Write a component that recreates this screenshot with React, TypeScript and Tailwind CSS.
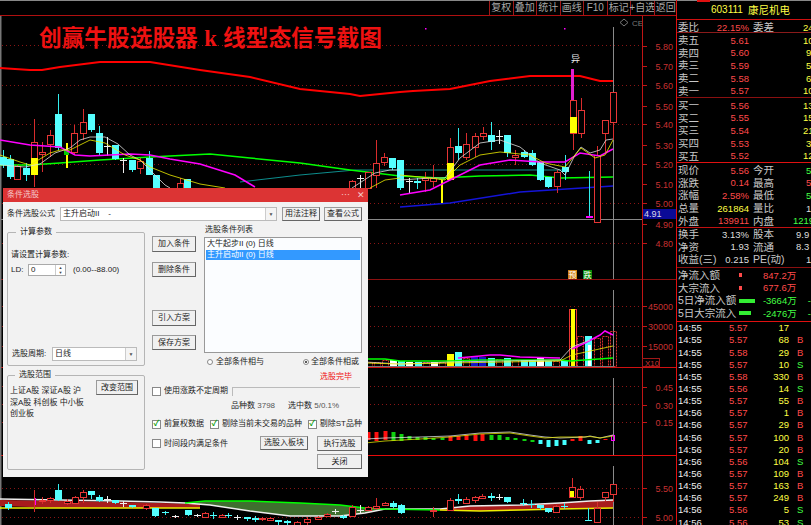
// 选股器截图：左侧 K 线图 + 条件选股弹窗，右侧盘口
type Candle = [number, number, number, number, number, string];

// x, 实体上, 实体下, 影线上, 影线下, 类型 (r 空心红 / c 青 / w 十字白)
const mainCandles: Candle[] = [
  [3, 157, 165, 150, 168, "c"], [10, 159, 177, 155, 179, "c"], [17, 166, 179, 165, 180, "r"], [26, 168, 175, 163, 181, "c"],
  [34, 142, 158, 119, 187, "r"], [42, 152, 154, 142, 172, "r"], [50, 135, 144, 130, 157, "r"], [58, 114, 148, 94, 150, "c"],
  [74, 133, 152, 125, 155, "r"], [83, 122, 133, 109, 140, "r"], [91, 114, 130, 114, 132, "c"], [99, 133, 153, 126, 155, "c"],
  [107, 146, 147, 137, 156, "w"], [115, 145, 159, 145, 160, "c"], [123, 160, 161, 158, 173, "w"], [132, 160, 170, 160, 172, "c"],
  [140, 161, 168, 158, 174, "r"], [149, 158, 175, 151, 175, "c"], [156, 175, 188, 175, 188, "c"], [180, 183, 188, 178, 188, "r"], [187, 179, 188, 179, 188, "c"],
  [352, 181, 188, 180, 188, "r"], [360, 178, 179, 175, 188, "w"], [368, 172, 188, 172, 188, "r"], [376, 163, 175, 140, 188, "r"], [384, 157, 162, 153, 166, "r"],
  [392, 158, 168, 158, 170, "c"], [400, 160, 188, 160, 190, "c"], [409, 181, 182, 178, 193, "w"], [417, 181, 183, 178, 189, "c"], [425, 178, 180, 172, 192, "r"], [433, 178, 181, 165, 187, "r"],
  [458, 146, 153, 128, 160, "c"], [466, 144, 157, 133, 160, "r"], [475, 136, 147, 133, 157, "r"], [483, 133, 136, 127, 140, "r"], [491, 135, 142, 122, 150, "c"],
  [499, 136, 137, 130, 144, "w"], [507, 135, 153, 135, 157, "c"], [515, 155, 157, 150, 165, "r"], [524, 152, 157, 150, 158, "c"], [532, 153, 165, 150, 166, "c"],
  [540, 162, 180, 162, 181, "c"], [548, 177, 187, 177, 188, "c"], [557, 172, 186, 170, 193, "r"], [565, 167, 172, 155, 180, "c"], [581, 110, 133, 98, 138, "r"],
  [589, 216, 218, 171, 218, "c"], [597, 155, 222, 146, 222, "r"], [605, 120, 133, 120, 152, "r"], [613, 92, 122, 92, 140, "r"],
];

const lowCandles: Candle[] = [
  [8, 504, 508, 502, 510, "c"], [42, 500, 501, 497, 504, "r"], [50, 498, 500, 497, 503, "r"], [58, 490, 500, 484, 501, "c"], [67, 501, 503, 499, 505, "r"],
  [75, 497, 503, 496, 504, "r"], [83, 492, 497, 490, 503, "r"], [91, 491, 495, 491, 499, "c"], [99, 497, 501, 495, 502, "c"], [107, 499, 500, 496, 503, "w"],
  [115, 500, 503, 500, 504, "c"], [123, 503, 504, 501, 507, "w"], [132, 505, 507, 505, 508, "c"], [146, 505, 508, 504, 510, "r"], [155, 508, 516, 508, 517, "c"],
  [165, 512, 513, 511, 515, "c"], [175, 516, 517, 515, 518, "w"], [188, 510, 515, 510, 516, "c"], [197, 515, 516, 514, 517, "w"], [205, 513, 517, 512, 518, "r"], [213, 515, 516, 512, 519, "c"],
  [222, 515, 517, 514, 518, "r"], [228, 515, 516, 513, 518, "c"], [237, 517, 518, 515, 520, "w"], [247, 517, 519, 517, 521, "c"], [255, 518, 520, 516, 522, "c"],
  [262, 518, 519, 517, 521, "r"], [270, 518, 520, 517, 521, "r"], [278, 520, 522, 520, 525, "c"], [287, 521, 523, 520, 525, "c"], [297, 522, 525, 521, 525, "r"], [307, 519, 522, 517, 525, "r"],
  [318, 517, 519, 516, 520, "r"], [327, 514, 516, 513, 517, "r"], [335, 511, 512, 509, 514, "w"], [343, 516, 518, 515, 519, "c"], [352, 507, 516, 505, 517, "r"], [360, 510, 511, 505, 513, "w"], [368, 507, 510, 506, 511, "r"],
  [376, 506, 508, 498, 510, "r"], [385, 503, 505, 502, 506, "r"], [393, 503, 507, 501, 508, "c"], [401, 505, 513, 504, 514, "c"], [433, 510, 511, 507, 517, "r"],
  [450, 500, 510, 498, 511, "r"], [458, 499, 501, 494, 504, "c"], [466, 499, 503, 497, 504, "r"], [475, 497, 500, 496, 503, "r"], [482, 496, 498, 494, 499, "r"],
  [491, 496, 498, 493, 501, "c"], [499, 497, 498, 494, 500, "w"], [507, 497, 502, 497, 503, "c"], [523, 503, 504, 499, 506, "c"], [531, 504, 505, 500, 508, "c"], [540, 505, 508, 505, 510, "c"],
  [548, 508, 512, 508, 513, "c"], [556, 506, 512, 505, 513, "r"], [564, 506, 507, 503, 509, "c"], [572, 487, 497, 478, 498, "r"], [580, 489, 497, 486, 500, "r"],
  [588, 520, 521, 508, 521, "c"], [597, 508, 522, 502, 522, "r"], [605, 492, 497, 492, 501, "r"], [613, 484, 494, 484, 502, "r"],
];

// 量能柱 x, 顶部, 类型
const volBars: [number, number, string][] = [
  [369, 362, "r"], [377, 362, "r"], [385, 360, "r"], [393, 360, "w"], [401, 361, "c"], [409, 362, "w"], [418, 362, "c"], [426, 362, "r"], [434, 362, "w"], [442, 362, "r"],
  [450, 354, "y"], [458, 352, "c"], [466, 358, "r"], [474, 357, "b"], [482, 357, "b"], [491, 358, "c"], [499, 359, "r"], [507, 358, "c"], [515, 360, "r"], [524, 360, "c"],
  [532, 360, "c"], [540, 357, "w"], [548, 361, "c"], [556, 361, "r"], [564, 360, "c"], [580, 336, "r"], [588, 336, "c"], [597, 338, "r"], [605, 336, "r"], [613, 331, "r"],
];

// 指标柱 x, 上, 下, 颜色
const macdBars: [number, number, number, string][] = [
  [368, 432, 440, "#ff1010"], [376, 432, 441, "#ff1010"], [385, 431, 440, "#ff1010"], [393, 432, 441, "#10d010"], [401, 434, 441, "#10d010"], [409, 436, 440, "#10d010"],
  [417, 437, 440, "#10d010"], [425, 437, 440, "#10d010"], [433, 438, 440, "#10d010"], [442, 438, 440, "#10d010"], [450, 436, 441, "#ff1010"], [458, 436, 440, "#ff1010"],
  [466, 435, 440, "#ff1010"], [475, 435, 441, "#ff1010"], [482, 434, 441, "#ff1010"], [491, 435, 440, "#10d010"], [499, 435, 440, "#10d010"], [507, 437, 440, "#10d010"],
  [515, 438, 440, "#10d010"], [524, 439, 441, "#10d010"], [532, 440, 442, "#10d010"], [540, 440, 444, "#4ff"], [548, 440, 447, "#4ff"], [556, 440, 446, "#4ff"], [564, 440, 445, "#4ff"],
  [572, 439, 441, "#ff1010"], [580, 436, 441, "#ff1010"], [589, 440, 444, "#4ff"], [597, 440, 443, "#4ff"], [605, 439, 440, "#ff1010"],
];

const priceLabels: [string, number][] = [
  ["5.80", 46], ["5.70", 66], ["5.60", 85], ["5.50", 106], ["5.40", 124], ["5.30", 145], ["5.20", 164], ["5.10", 184], ["5.00", 203], ["4.90", 224], ["4.80", 243],
  ["45000", 306], ["30000", 326], ["15000", 346], ["0.45", 387], ["0.30", 405], ["0.15", 422], ["5.50", 488], ["5.00", 517],
];

const gridY = [45, 85, 124, 164, 203, 243, 306, 326, 346, 386, 404, 422, 488, 517];

function Candles({ data }: { data: Candle[] }) {
  return (
    <>
      {data.map(([x, top, bottom, hi, lo, kind], i) => {
        if (kind === "c") {
          return (
            <g key={i}>
              <rect x={x} y={hi} width={1} height={lo - hi} fill="#3ee" />
              <rect x={x - 3} y={top} width={7} height={bottom - top} fill="#55ffff" />
            </g>
          );
        }
        if (kind === "w") {
          return (
            <g key={i}>
              <rect x={x} y={hi} width={1} height={lo - hi} fill="#eee" />
              <rect x={x - 3} y={top} width={7} height={1} fill="#eee" />
            </g>
          );
        }
        return (
          <g key={i}>
            <rect x={x} y={hi} width={1} height={lo - hi} fill="#d82c2c" />
            <rect x={x - 2.5} y={top + 0.5} width={6} height={bottom - top} fill="#000" stroke="#e63535" />
          </g>
        );
      })}
    </>
  );
}

function Line({ pts, color, w = 1, dash }: { pts: string; color: string; w?: number; dash?: string }) {
  return <polyline points={pts} fill="none" stroke={color} strokeWidth={w} strokeDasharray={dash} />;
}

function ChartSvg() {
  return (
    <svg viewBox="0 16 677 509" className="block w-[677px] h-[509px]">
      {/* 分隔线 */}
      {gridY.map((y) => (
        <line key={y} x1={2} x2={642} y1={y + 0.5} y2={y + 0.5} stroke="#8a1515" strokeDasharray="1 3" />
      ))}
      <rect x={0} y={279} width={677} height={1} fill="#8c1010" />
      <rect x={0} y={367} width={677} height={1} fill="#d01010" />
      <rect x={0} y={455} width={677} height={1} fill="#e80a0a" />
      <rect x={0} y={219} width={643} height={1} fill="#888" />
      <rect x={642} y={16} width={1} height={509} fill="#c01515" />
      <rect x={0} y={16} width={1.5} height={509} fill="#777" />
      <rect x={613} y={27} width={1} height={252} fill="#8a8a8a" />
      <rect x={613} y={290} width={1} height={76} fill="#8a8a8a" />
      <rect x={613} y={378} width={1} height={77} fill="#8a8a8a" />
      <rect x={613} y={466} width={1} height={59} fill="#8a8a8a" />

      {/* 坐标 */}
      {priceLabels.map(([t, y], i) => (
        <g key={i}>
          <rect x={642} y={y} width={5} height={1} fill="#c01515" />
          <text x={673} y={y + 3.5} textAnchor="end" fontSize={9} fill="#c83232">{t}</text>
        </g>
      ))}
      <rect x={643} y={209} width={34} height={10} fill="#0a0a96" />
      <text x={644} y={217} fontSize={9} fill="#d8d8e8">4.91</text>
      <rect x={642.5} y={358.5} width={17} height={8} fill="none" stroke="#a01818" />
      <text x={645} y={365.5} fontSize={8} fill="#c83232">X10</text>

      {/* 均线 */}
      <polyline points="0,68 30,70 42,70 60,67 100,62 150,62 200,70 250,77 300,89 350,94 360,96 400,92 413,91 450,89 490,81 530,76 550,76 580,76 600,81 613,81" fill="none" stroke="#f00" strokeWidth={2} />
      <Line pts="240,182 300,175 355,170 400,170 565,170" color="#0d8d8d" />
      <Line pts="400,207 450,203 520,192 613,186" color="#1414d8" w={1.5} />
      <Line pts="0,165 30,165 60,163 100,160 150,157 210,154 250,158 300,163 350,170 400,176 440,178 480,176 530,175 560,178 613,177" color="#0f0" w={1.5} />

      <Candles data={mainCandles} />

      {/* 涨停标记 */}
      <rect x={66} y={143} width={2} height={25} fill="#ff0" />
      <rect x={64} y={150} width={5} height={5} fill="#0c0" />
      <rect x={31} y={158} width={7} height={17} fill="#ff0" />
      <rect x={441} y={180} width={2} height={23} fill="#ff0" />
      <rect x={439} y={178} width={6} height={2} fill="#0c0" />
      <rect x={450} y={138} width={1} height={10} fill="#d82c2c" />
      <rect x={447.5} y={147.5} width={6} height={16} fill="#000" stroke="#e63535" />
      <rect x={447} y={163} width={7} height={17} fill="#ff0" />
      <rect x={573} y={133} width={1} height={17} fill="#d82c2c" />
      <rect x={571} y={69} width={3} height={31} fill="#e020d0" />
      <rect x={570.5} y={100.5} width={6} height={33} fill="#000" stroke="#e63535" />
      <rect x={570} y={117} width={7} height={16} fill="#ff0" />
      <rect x={586} y={216} width={7} height={2} fill="#f0f" />
      <text x={571} y={62} fontSize={9} fill="#eee">异</text>
      <rect x={425} y={28} width={1.5} height={1.5} fill="#f0f" />
      <rect x={564} y={28} width={1.5} height={1.5} fill="#f0f" />
      <polygon points="624,19 628,22.5 624,26 620,22.5" fill="none" stroke="#777" />
      <text x={632} y={26} fontSize={8} fill="#777">CE</text>

      <Line pts="0,140 30,145 60,147 75,155 90,156 130,154 150,155 170,159 200,164 235,175 255,187" color="#f0f" w={1.5} />
      <Line pts="400,195 430,190 450,180 480,165 510,160 540,162 565,162 580,153 600,156 613,149" color="#f0f" w={1.5} />
      <Line pts="0,165 25,167 40,164 55,153 70,148 80,140 90,137 105,137 118,144 130,155 140,160 150,170 165,185 170,188" color="#ddd" w={0.8} />
      <Line pts="352,188 375,173 390,170 400,170" color="#ddd" w={0.8} />
      <Line pts="400,180 430,178 445,178 460,158 480,143 500,140 520,147 540,163 560,170 565,175 575,155 581,147 590,153 600,150 606,140 613,139" color="#ddd" w={0.8} />
      <Line pts="0,155 20,162 30,165 50,153 60,150 70,150 90,140 105,143 125,155 140,160 150,167 170,175 200,184 225,188" color="#ee0" w={0.8} />
      <Line pts="370,188 385,180 400,178" color="#ee0" w={0.8} />
      <Line pts="400,175 430,178 445,180 460,165 480,155 500,152 530,155 545,163 565,167 575,155 581,148 595,158 605,155 613,140" color="#ee0" w={0.8} />

      {/* 量能 */}
      {volBars.map(([x, top, k]) =>
        k === "r" ? (
          <rect key={x} x={x - 2.5} y={top + 0.5} width={6} height={366 - top} fill="none" stroke="#d83030" strokeDasharray="2 1" />
        ) : (
          <rect key={x} x={x - 3} y={top} width={7} height={366 - top} fill={k === "c" ? "#55ffff" : k === "w" ? "#fff" : k === "y" ? "#ff0" : "#1414c8"} />
        ),
      )}
      <rect x={569.5} y={309.5} width={7} height={57} fill="none" stroke="#e63535" />
      <rect x={571} y={309} width={4} height={57} fill="#ff0" />
      <rect x={588} y={345} width={3} height={21} fill="#fff" />
      <rect x={365} y={366} width={249} height={1} fill="#777" />
      <Line pts="365,359 385,359 400,361 450,361 480,360 560,360 570,361 613,358" color="#0f0" w={1.5} />
      <Line pts="458,358 480,356 490,355 500,355 520,357 560,358" color="#f0f" w={1.5} />
      <Line pts="572,349 585,343 600,335 605,331 613,335" color="#f0f" w={1.5} />
      <Line pts="365,362 400,364 450,362 560,360 572,347 590,340" color="#ddd" w={0.8} />
      <Line pts="365,363 400,364 450,363 560,361 572,355 613,346" color="#ee0" w={0.8} />
      <rect x={568} y={270} width={9} height={9} fill="#d08010" />
      <text x={568.5} y={278} fontSize={8} fill="#fff">预</text>
      <rect x={583} y={270} width={9} height={9} fill="#0a8a0a" />
      <text x={583.5} y={278} fontSize={8} fill="#fff">跌</text>

      {/* 指标 */}
      {macdBars.map(([x, a, b, c]) => (
        <rect key={x} x={x - 1.5} y={a} width={4} height={b - a} fill={c} />
      ))}
      <rect x={611.5} y={435.5} width={3} height={5} fill="none" stroke="#f0f" />
      <Line pts="365,439 385,438 420,437 450,436 480,433 510,432 530,435 545,437 560,438 585,437 590,436 600,438 613,435" color="#ddd" w={0.8} />
      <Line pts="365,443 385,441 420,439 450,437 480,434 510,433 530,436 545,438 560,437 585,437 590,436.5 600,438 613,436" color="#dd0" w={0.8} />

      {/* 底部图 */}
      <polygon points="0,500 60,501 120,502 160,503 200,504 200,508 120,508 60,508 0,506" fill="#a81c1c" />
      <polygon points="385,509 440,509 470,506 520,505 560,503 590,501 613,500 613,508 560,509 520,510 480,511 440,510" fill="#a81c1c" />
      <polygon points="185,503 205,501 250,501 300,503 340,505 365,508 385,509 365,513 340,516 290,516 250,511 210,505" fill="#3f6f2f" />
      <Line pts="0,499 60,500 120,501 160,502 185,503 210,505 250,511 290,516 340,516 365,513 385,509 440,509 470,506 520,505 560,503 590,501 613,500" color="#eee" w={1.5} />
      <Line pts="185,503 205,501 250,501 300,503 340,505 365,508 385,509 440,510" color="#0f0" w={1.5} />
      <Line pts="0,508 60,508 120,508 200,508" color="#ee0" w={1.5} />
      <Line pts="440,510 480,511 520,510 560,509 613,508" color="#ee0" w={1.5} />
      <Candles data={lowCandles} />
      <rect x={34} y={498} width={2} height={7} fill="#f0f" />
      <rect x={34} y={490} width={1} height={22} fill="#d82c2c" />
      <rect x={570} y={491} width={4} height={6} fill="#ff0" />
    </svg>
  );
}

const toolItems = ["复权", "叠加", "统计", "画线", "F10", "标记", "+自选", "返回"];

function Btn({ label, className }: { label: string; className: string }) {
  return (
    <button className={`flex items-center justify-center bg-[#f0f0f0] border border-[#9a9a9a] border-b-[#666] border-r-[#666] text-[8px] leading-none text-[#222] ${className}`}>
      {label}
    </button>
  );
}

function Check({ on }: { on?: boolean }) {
  return (
    <span className="flex items-center justify-center w-[9px] h-[9px] shrink-0 bg-white border border-[#888] text-[8px] leading-none font-bold text-[#12a012]">
      {on ? "✓" : ""}
    </span>
  );
}

function Arrow({ className }: { className: string }) {
  return (
    <span className={`flex items-center justify-center border-l border-[#ccc] bg-[#f4f4f4] text-[#555] text-[5px] leading-none ${className}`}>▼</span>
  );
}

function ConditionDialog() {
  return (
    <div className="absolute left-[3px] top-[188px] w-[365px] h-[289px] flex flex-col bg-[#f2f2f2] text-[8px] leading-[10px] text-[#222]">
      <div className="h-[14px] shrink-0 flex items-center justify-between pl-[4px] pr-[3px] bg-[#dc3434] text-[#f5c8c8]">
        <span>条件选股</span>
        <span className="flex gap-[7px] text-[9px] leading-none">
          <span>⋯</span>
          <span>✕</span>
        </span>
      </div>

      {/* 公式行 */}
      <div className="mt-[5px] h-[14px] flex items-center pl-[4px]">
        <span className="w-[53px]">条件选股公式</span>
        <div className="w-[217px] h-[14px] flex items-center justify-between bg-white border border-[#bbb] pl-[2px]">
          <span className="whitespace-pre">主升启动II    -</span>
          <Arrow className="w-[11px] h-full" />
        </div>
        <Btn label="用法注释" className="ml-[5px] w-[38px] h-[14px]" />
        <Btn label="查看公式" className="ml-[4px] w-[38px] h-[14px]" />
      </div>

      <div className="mt-[4px] flex pl-[4px]">
        {/* 左列 */}
        <div className="w-[138px] pt-[2px] flex flex-col">
          <fieldset className="h-[139px] border border-[#b5b5b5] rounded-[2px] px-[3px]">
            <legend className="ml-[5px] px-[4px] h-[10px]">计算参数</legend>
            <div className="mt-[13px]">请设置计算参数:</div>
            <div className="mt-[4px] h-[12px] flex items-center">
              <span className="w-[17px]">LD:</span>
              <div className="w-[38px] h-[12px] flex items-center justify-between bg-white border border-[#aaa] pl-[2px]">
                <span>0</span>
                <span className="flex flex-col items-center justify-center w-[10px] h-full border-l border-[#ccc] text-[4px] leading-[5px] text-[#444]">
                  <span>▲</span>
                  <span>▼</span>
                </span>
              </div>
              <span className="ml-[7px]">(0.00--88.00)</span>
            </div>
            <div className="mt-[71px] h-[14px] flex items-center pl-[1px]">
              <span className="w-[40px]">选股周期:</span>
              <div className="w-[85px] h-[14px] flex items-center justify-between bg-white border border-[#bbb] pl-[2px]">
                <span>日线</span>
                <Arrow className="w-[11px] h-full" />
              </div>
            </div>
          </fieldset>
          <fieldset className="mt-[4px] h-[100px] border border-[#b5b5b5] rounded-[2px] px-[2px]">
            <legend className="ml-[5px] px-[4px] h-[10px]">选股范围</legend>
            <div className="flex">
              <div className="w-[77px] pt-[5px] leading-[11.5px] break-all">
                上证A股 深证A股 沪深A股 科创板 中小板 创业板
              </div>
              <Btn label="改变范围" className="ml-[9px] w-[42px] h-[15px]" />
            </div>
          </fieldset>
        </div>

        {/* 右列 */}
        <div className="ml-[7px] w-[210px] flex flex-col">
          <div className="flex">
            <div className="w-[44px] pt-[11px] flex flex-col">
              <Btn label="加入条件" className="w-[44px] h-[16px]" />
              <Btn label="删除条件" className="mt-[10px] w-[44px] h-[15px]" />
              <Btn label="引入方案" className="mt-[33px] w-[44px] h-[16px]" />
              <Btn label="保存方案" className="mt-[9px] w-[44px] h-[15px]" />
            </div>
            <div className="ml-[8px] w-[158px] flex flex-col">
              <div className="h-[12px] pl-[1px]">选股条件列表</div>
              <div className="h-[116px] bg-[#fbfdff] border border-[#999] pt-[1px] px-[1px]">
                <div className="h-[11px] pl-[1px]">大牛起步II (0) 日线</div>
                <div className="h-[10px] pl-[1px] bg-[#3399ff] text-white">主升启动II (0) 日线</div>
              </div>
              <div className="mt-[4px] h-[10px] flex items-center pl-[3px]">
                <span className="w-[6px] h-[6px] rounded-full border border-[#888] bg-white" />
                <span className="ml-[3px] w-[87px]">全部条件相与</span>
                <span className="flex items-center justify-center w-[6px] h-[6px] rounded-full border border-[#888] bg-white">
                  <span className="w-[2px] h-[2px] rounded-full bg-[#222]" />
                </span>
                <span className="ml-[2px] whitespace-nowrap">全部条件相或</span>
              </div>
              <div className="mt-[5px] h-[10px] pl-[116px] text-[#f01010] whitespace-nowrap">选股完毕</div>
            </div>
          </div>

          <div className="mt-[4px] h-[10px] flex items-center">
            <Check />
            <span className="ml-[3px] w-[68px] whitespace-nowrap">使用涨跌不定周期</span>
            <span className="w-[128px] h-[9px] border-t border-l border-[#bbb]" />
          </div>
          <div className="mt-[5px] h-[10px] flex items-center pl-[79px] border-0">
            <span className="w-[57px] whitespace-nowrap">品种数 <span className="text-[#555]">3798</span></span>
            <span className="whitespace-nowrap">选中数 <span className="text-[#555]">5/0.1%</span></span>
          </div>
          <div className="mt-[8px] h-[10px] flex items-center">
            <Check on />
            <span className="ml-[3px] w-[46px] whitespace-nowrap">前复权数据</span>
            <Check on />
            <span className="ml-[3px] w-[86px] whitespace-nowrap">剔除当前未交易的品种</span>
            <Check on />
            <span className="ml-[3px] whitespace-nowrap">剔除ST品种</span>
          </div>
          <div className="mt-[7px] flex">
            <div className="w-[108px] h-[15px] flex items-center">
              <Check />
              <span className="ml-[3px] whitespace-nowrap">时间段内满足条件</span>
            </div>
            <Btn label="选股入板块" className="w-[48px] h-[14px]" />
            <div className="ml-[9px] w-[45px] flex flex-col">
              <Btn label="执行选股" className="w-[45px] h-[15px]" />
              <Btn label="关闭" className="mt-[3px] w-[45px] h-[15px]" />
            </div>
          </div>
        </div>
      </div>
    </div>
  );
}

type QuoteData = { a: string; v: string; vc?: string; b?: string; r?: string; rc?: string; rw?: string };

function Quote({ a, v, vc = "text-[#ff4a4a]", b, r, rc = "text-[#ff4a4a]", rw = "w-[8px]" }: QuoteData) {
  return (
    <div className="h-[12.7px] flex items-center whitespace-nowrap pl-px">
      <span className="w-[34px] text-[10.5px] text-[#c8c8c8]">{a}</span>
      <span className={`w-[37px] text-right ${vc}`}>{v}</span>
      {b && <span className="ml-[4px] text-[10.5px] text-[#c8c8c8]">{b}</span>}
      {r && <span className={`ml-auto overflow-hidden ${rw} ${rc}`}>{r}</span>}
    </div>
  );
}

const asks: QuoteData[] = [
  { a: "卖五", v: "5.61", r: "10", rc: "text-[#ffff44]" }, { a: "卖四", v: "5.60", r: "9", rc: "text-[#ffff44]", rw: "w-[5px]" }, { a: "卖三", v: "5.59", r: "5", rc: "text-[#ffff44]", rw: "w-[5px]" },
  { a: "卖二", v: "5.58", r: "6", rc: "text-[#ffff44]", rw: "w-[5px]" }, { a: "卖一", v: "5.57", r: "10", rc: "text-[#ffff44]" },
];
const bids: QuoteData[] = [
  { a: "买一", v: "5.56", r: "13", rc: "text-[#ffff44]" }, { a: "买二", v: "5.55", r: "15", rc: "text-[#ffff44]" }, { a: "买三", v: "5.54", r: "21", rc: "text-[#ffff44]" },
  { a: "买四", v: "5.53", r: "3", rc: "text-[#ffff44]", rw: "w-[5px]" }, { a: "买五", v: "5.52", r: "12", rc: "text-[#ffff44]" },
];
const stats: QuoteData[] = [
  { a: "现价", v: "5.56", b: "今开", r: "5", rc: "text-[#44ff44]", rw: "w-[5px]" },
  { a: "涨跌", v: "0.14", b: "最高", r: "5", rw: "w-[5px]" },
  { a: "涨幅", v: "2.58%", b: "最低", r: "5", rc: "text-[#44ff44]", rw: "w-[5px]" },
  { a: "总量", v: "261864", vc: "text-[#ffff44]", b: "量比", r: "1", rc: "text-[#ddd]", rw: "w-[5px]" },
  { a: "外盘", v: "139911", b: "内盘", r: "1219", rc: "text-[#44ff44]", rw: "w-[18px]" },
];
const shares: QuoteData[] = [
  { a: "换手", v: "3.13%", vc: "text-[#ddd]", b: "股本", r: "9.9", rc: "text-[#ddd]", rw: "w-[15px]" },
  { a: "净资", v: "1.93", vc: "text-[#ddd]", b: "流通", r: "8.3", rc: "text-[#ddd]", rw: "w-[15px]" },
  { a: "收益(三)", v: "0.215", vc: "text-[#ddd]", b: "PE(动)", r: "1", rc: "text-[#ddd]", rw: "w-[5px]" },
];
const flows = [
  { a: "净流入额", w: "w-[3px]", bar: "bg-[#ff4a4a]", v: "847.2万", c: "text-[#ff4a4a]", tail: "" },
  { a: "大宗流入", w: "w-[3px]", bar: "bg-[#ff4a4a]", v: "677.6万", c: "text-[#ff4a4a]", tail: "" },
  { a: "5日净流入额", w: "w-[16px]", bar: "bg-[#33ee33]", v: "-3664万", c: "text-[#44ff44]", tail: "-" },
  { a: "5日大宗流入", w: "w-[12px]", bar: "bg-[#33ee33]", v: "-2476万", c: "text-[#44ff44]", tail: "-" },
];
const ticks: [string, string, string, string][] = [
  ["14:55", "5.57", "17", ""], ["14:55", "5.57", "68", "B"], ["14:55", "5.58", "29", "B"], ["14:55", "5.57", "10", "S"], ["14:55", "5.58", "330", "B"], ["14:55", "5.56", "14", "S"],
  ["14:55", "5.57", "55", "B"], ["14:56", "5.57", "1", "B"], ["14:56", "5.57", "29", "B"], ["14:56", "5.57", "100", "B"], ["14:56", "5.57", "20", "B"], ["14:56", "5.56", "104", "S"],
  ["14:56", "5.57", "109", "B"], ["14:56", "5.57", "163", "B"], ["14:56", "5.57", "249", "B"], ["14:56", "5.56", "5", "S"], ["14:56", "5.56", "53", "S"],
];

function QuotePanel() {
  return (
    <div className="w-[134px] h-[525px] shrink-0 flex flex-col overflow-hidden text-[9.5px] leading-none">
      <div className="relative h-[19px] shrink-0 flex items-center pl-[34px] text-[#ffff44] border-t border-t-[#888]">
        <span className="absolute left-[20px] top-[-1px] w-[13px] h-[2px] bg-[#e01010]" />
        <span className="text-[10px]">603111</span>
        <span className="ml-[5px] text-[10.5px]">康尼机电</span>
      </div>
      <div className="h-[14px] shrink-0 border-t border-[#d01010] border-b border-b-[#8a1a1a] pt-px">
        <Quote a="委比" v="22.15%" b="委差" r="24" rc="text-[#ffff44]" />
      </div>
      <div className="pt-[1px] h-[65px] shrink-0 border-b border-[#8a1010]">
        {asks.map((q) => <Quote key={q.a} {...q} />)}
      </div>
      <div className="h-[65px] shrink-0 border-b border-[#e01010] pt-[1px]">
        {bids.map((q) => <Quote key={q.a} {...q} />)}
      </div>
      <div className="h-[65px] shrink-0 border-b border-[#c01010] pt-[1px]">
        {stats.map((q) => <Quote key={q.a} {...q} />)}
      </div>
      <div className="h-[40px] shrink-0 border-b border-[#8a1010]">
        {shares.map((q) => <Quote key={q.a} {...q} />)}
      </div>
      <div className="h-[54px] shrink-0 border-b border-[#e01010] pt-[1px]">
        {flows.map((f) => (
          <div key={f.a} className="h-[12.7px] flex items-center whitespace-nowrap pl-px">
            <span className="w-[61px] text-[10.5px] text-[#c8c8c8]">{f.a}</span>
            <span className="w-[24px]">
              <span className={`block h-[4px] ${f.w} ${f.bar}`} />
            </span>
            <span className={`w-[45px] ${f.c}`}>{f.v}</span>
            <span className="text-[#44ff44]">{f.tail}</span>
          </div>
        ))}
      </div>
      <div className="shrink-0">
        {ticks.map(([t, p, n, s], i) => (
          <div key={i} className="h-[12.15px] flex items-center whitespace-nowrap pl-px">
            <span className="w-[51px] text-[#eee]">{t}</span>
            <span className="w-[20px] text-[#ff4a4a]">{p}</span>
            <span className="w-[40px] text-right text-[#ffff44]">{n}</span>
            <span className={`ml-[8px] ${s === "S" ? "text-[#44ff44]" : "text-[#ff4a4a]"}`}>{s}</span>
          </div>
        ))}
      </div>
    </div>
  );
}

export default function App() {
  return (
    <div className="relative w-[811px] h-[525px] flex overflow-hidden bg-black font-['Liberation_Sans','Noto_Sans_CJK_SC',sans-serif]">
      <div className="w-[677px] h-[525px] shrink-0 flex flex-col">
        <div className="h-[16px] shrink-0 flex justify-end border-t border-t-[#888] border-b border-b-[#b01010] text-[10px] leading-none text-[#a8a8a8]">
          {toolItems.map((t) => (
            <span key={t} className="w-[23.5px] flex items-center justify-center border-l border-[#a01818] whitespace-nowrap">
              {t}
            </span>
          ))}
        </div>
        <ChartSvg />
      </div>
      <div className="w-px h-[525px] shrink-0 bg-[#e01010] -ml-px" />
      <QuotePanel />

      <div className="absolute left-[39px] top-[23px] text-[22.7px] leading-[30px] font-bold text-[#ee1111] whitespace-pre">
        创赢牛股选股器 <span className="font-['Liberation_Serif']">k</span> 线型态信号截图
      </div>
      <ConditionDialog />
    </div>
  );
}
